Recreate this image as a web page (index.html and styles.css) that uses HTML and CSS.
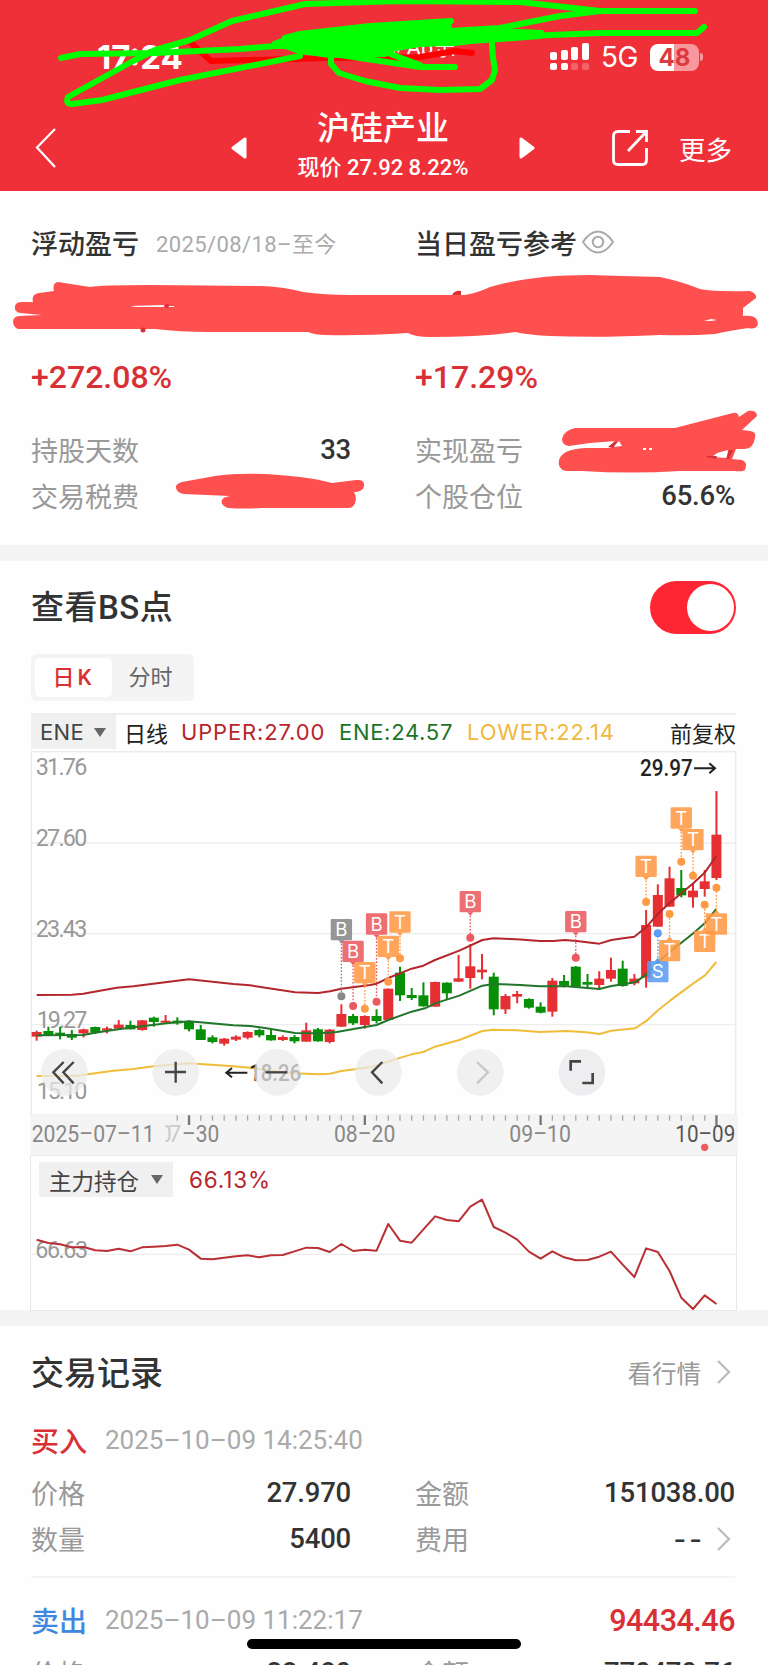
FILE: index.html
```html
<!DOCTYPE html>
<html lang="zh-CN">
  <head>
    <meta charset="utf-8" />
    <meta name="viewport" content="width=device-width, initial-scale=1" />
    <title>沪硅产业</title>
    <link rel="stylesheet" href="styles.css">
  </head>
  <body>
    <header class="header">
      <div class="status">
        <span class="time">17:24</span>
        <span class="island">颜 Ab乐</span>
        <svg class="signal" width="39" height="28" viewBox="0 0 39 28" fill="#fff">
          <rect x="0" y="9" width="7" height="8" rx="2" />
          <rect x="11" y="7" width="7" height="10" rx="2" />
          <rect x="21" y="4" width="7" height="13" rx="2" />
          <rect x="32" y="0" width="7" height="17" rx="2" />
          <rect x="0" y="20" width="7" height="7" rx="2" />
          <rect x="11" y="20" width="7" height="7" rx="2" />
          <rect x="21" y="20" width="7" height="7" rx="2" opacity="0.25" />
          <rect x="32" y="20" width="7" height="7" rx="2" opacity="0.25" />
        </svg>
        <span class="network">5G</span>
        <span class="battery">48</span>
        <span class="battery-tip"></span>
      </div>
      <div class="navbar">
        <svg class="back" width="24" height="42" viewBox="0 0 24 42">
          <path d="M21 2 L3 20.500 L21 40" fill="none" stroke="#fff" stroke-width="2.200" />
        </svg>
        <svg class="prev" width="16" height="24" viewBox="0 0 16 24">
          <path d="M14 3 V21 L2 12 Z" fill="#fff" stroke="#fff" stroke-width="3" stroke-linejoin="round" />
        </svg>
        <div class="title">
          <h1>沪硅产业</h1>
          <p>现价 27.92 8.22%</p>
        </div>
        <svg class="next" width="16" height="24" viewBox="0 0 16 24">
          <path d="M2 3 V21 L14 12 Z" fill="#fff" stroke="#fff" stroke-width="3" stroke-linejoin="round" />
        </svg>
        <svg class="share" width="38" height="38" viewBox="0 0 38 38" fill="none" stroke="#fff" stroke-width="2.800">
          <path d="M19 2.500 H7 Q2.500 2.500 2.500 7 V31 Q2.500 35.500 7 35.500 H31 Q35.500 35.500 35.500 31 V19" />
          <path d="M25 2.500 H35.500 V13 M35 3 L17 22" />
        </svg>
        <span class="more">更多</span>
      </div>
      <svg class="doodle" width="768" height="190" viewBox="0 0 768 190" fill="none" stroke-linecap="round" stroke-linejoin="round">
        <path stroke="#f00" stroke-width="6" d="M189 41 L211 61 L250 60 L330 58 L420 57 L455 51 L472 53" />
        <g stroke="#0f0" stroke-width="6">
          <path d="M61 58 L80 54 L155 53 L240 49 L275 46 L340 46" />
          <path d="M695 11 H600 L520 2 L400 1 L305 4 L232 21 L190 41 L130 68 L67 97 Q64 104 72 104 L102 100 L180 80 L300 56" stroke="none" />
          <path d="M695 11 H600 L520 2 L400 1 L305 4 L232 21 L190 40 L155 50 L133 61 L68 97 Q65 104 72 104 L102 100 L180 80 L300 56" />
          <path d="M600 11 L560 16 L500 28 L450 31" />
          <path d="M704 27 L697 33 L600 33 L500 37 L455 43 L390 44" />
          <path d="M331 57 V64 L339 73 L365 81 L400 88 L440 90 L480 89 L492 80 L495 70 L493 58 L492 44" />
          <path d="M340 55 L380 61 L420 67 H455 M385 52 L420 65" />
          <path d="M285 38 L300 34 L370 26 L451 21" />
        </g>
        <path fill="#0f0" stroke="#0f0" stroke-width="4" d="M274 43 L295 36 L340 31 L400 26 L450 26 L445 31 L495 30 L542 32 L540 37 L500 40 L455 43 L420 45 L390 50 L385 55 L330 56 L300 52 Z" />
      </svg>
    </header>

    <section class="summary">
      <div class="col">
        <div class="heading">浮动盈亏<span class="period">2025/08/18–至今</span></div>
        <div class="rate">+272.08%</div>
        <div class="row"><label>持股天数</label><b>33</b></div>
        <div class="row"><label>交易税费</label></div>
      </div>
      <div class="col">
        <div class="heading">当日盈亏参考
          <svg class="eye" width="32" height="24" viewBox="0 0 32 24" fill="none" stroke="#aaa" stroke-width="2">
            <path d="M1 12 Q8 1.500 16 1.500 T31 12 Q24 22.500 16 22.500 T1 12 Z" />
            <circle cx="16" cy="12" r="5.200" />
          </svg>
        </div>
        <div class="rate">+17.29%</div>
        <div class="row"><label>实现盈亏</label></div>
        <div class="row"><label>个股仓位</label><b>65.6%</b></div>
      </div>
      <svg class="doodle" width="768" height="355" viewBox="0 190 768 355">
        <g fill="#ff5050">
          <path d="M58 282 L90 287 Q100 285 150 285 L262 286 Q285 287 303 292 Q325 295 350 295 L465 295 Q480 292 490 287 Q530 275 590 275 Q620 276 660 277 Q680 281 700 289 Q715 292 750 291 Q757 294 756 298 L743 308 V316 Q758 314 758 324 Q756 330 748 328 Q728 331 715 334 Q690 336 660 335 Q600 338 550 336 Q530 335 515 332 Q480 337 430 337 Q415 337 408 333 Q360 336 325 335 Q315 335 308 332 L210 332 Q180 332 155 329 H18 Q13 327 13 321 Q14 316 20 316 L42 315 L20 313 Q14 312 15 306 Q16 302 22 302 H33 Q31 294 39 293 L54 291 Q52 283 58 282 Z" />
          <path d="M176 488 Q175 484 182 482 L215 476 Q250 471 300 477 Q318 479 332 483 L356 480 Q365 479 364 486 Q363 492 354 492 Q356 495 356 499 Q355 508 348 508 H262 Q245 509 228 508 Q220 505 222 500 Q223 497 230 496 L184 494 Q177 493 176 488 Z" />
          <path d="M575 428 H675 L733 413 Q738 412 739 417 L748 411 Q757 410 757 416 L742 430 L750 431 Q757 432 755 438 Q753 449 745 449 H736 L732 459 L742 460 Q748 462 745 470 Q743 472 734 471 L680 471 Q630 474 582 471 H566 Q557 469 559 460 Q562 449 585 448 L611 448 L616 441 L590 443 L569 446 Q562 445 562 439 Q563 431 575 428 Z" />
        </g>
        <g fill="#fff">
          <path d="M130 306 L164 305 V307 L136 307 Z M168 306 H174 V307 H168 Z" />
          <path d="M704 321 L711 319 L717 320 L711 321 Z" />
          <path d="M613 447 L619 441 L622 446 Z M643 448 H646 V450 H643 Z M649 448 H652 V450 H649 Z M717 453 L728 450 L727 458 L712 457 Z" />
        </g>
        <g fill="#d92f35">
          <path d="M452 295 Q455 290 461 291 V295 Z" />
          <circle cx="167" cy="306" r="2" /><circle cx="143" cy="330" r="2.500" />
          <path d="M608 447 L615 441 L617 442 L613 448 Z M707 456 L717 456 L716 459 L706 457 Z M729 450 H733 L729 459 H726 Z" />
        </g>
      </svg>
    </section>

    <section class="chart-card">
      <div class="bs-row">
        <h2>查看BS点</h2>
        <span class="toggle"></span>
      </div>
      <div class="tabs">
        <span class="tab active">日K</span>
        <span class="tab">分时</span>
      </div>
      <div class="legend">
        <span class="select">ENE<i></i></span>
        <span class="line-type">日线</span>
        <span class="upper">UPPER:27.00</span>
        <span class="ene">ENE:24.57</span>
        <span class="lower">LOWER:22.14</span>
        <span class="adjust">前复权</span>
      </div>
      <svg class="kline" width="708" height="404" viewBox="90 33 2124 1212">
        <rect x="94" y="35" width="2113" height="1090" fill="none" stroke="#ebebeb" stroke-width="4" />
        <path d="M94 309 H2207 M94 581 H2207 M94 854 H2207" stroke="#ededed" stroke-width="4" />
        <rect x="92" y="1124" width="2122" height="121" fill="#f4f4f4" />
        <g class="axis">
          <text x="107" y="104" textLength="155">31.76</text>
          <text x="107" y="318" textLength="155">27.60</text>
          <text x="107" y="591" textLength="155">23.43</text>
          <text x="110" y="864" textLength="152">19.27</text>
          <text x="110" y="1077" textLength="152">15.10</text>
        </g>
        <g id="ticks" stroke="#aaa"></g>
        <g class="dates">
          <text class="faded" x="476" y="1205" textLength="68">07</text>
          <rect x="462" y="1150" width="34" height="66" fill="#f4f4f4" />
          <text x="95" y="1205" textLength="369" lengthAdjust="spacingAndGlyphs">2025–07–11</text>
          <text x="546" y="1205" textLength="112" lengthAdjust="spacingAndGlyphs">–30</text>
          <text x="1002" y="1205" textLength="184" lengthAdjust="spacingAndGlyphs">08–20</text>
          <text x="1528" y="1205" textLength="185" lengthAdjust="spacingAndGlyphs">09–10</text>
          <text class="today" x="2026" y="1205" textLength="180" lengthAdjust="spacingAndGlyphs">10–09</text>
        </g>
        <circle cx="2114" cy="1222" r="11" fill="#f05a5f" />
        <g id="candles"></g>
        <g fill="none" stroke-width="6" stroke-linejoin="round">
          <path stroke="#b3262b" d="M110 765 L215 764 L250 761 L350 743 L400 739 L567 718 L700 732 L750 736 L885 757 L955 759 L990 754 L1024 746 L1110 735 L1130 731 L1165 714 L1235 686 L1270 677 L1305 660 L1378 632 L1447 600 L1481 595 L1550 598 L1620 603 L1660 603 L1695 600 L1730 603 L1798 611 L1834 600 L1870 595 L1903 590 L1940 560 L1975 520 L2010 488 L2080 430 L2115 397 L2149 348" />
          <path stroke="#22762a" d="M110 886 L250 885 L285 878 L355 868 L426 859 L500 850 L567 844 L700 856 L750 858 L800 865 L885 879 L955 880 L1010 876 L1095 861 L1130 855 L1165 840 L1235 815 L1275 805 L1305 790 L1378 767 L1447 737 L1481 732 L1560 735 L1620 739 L1700 739 L1798 747 L1834 738 L1870 733 L1905 727 L1940 703 L1975 665 L2010 635 L2080 580 L2115 549 L2149 507" />
          <path stroke="#f0bd3a" d="M110 1008 L230 1007 L340 992 L400 987 L460 979 L567 970 L700 979 L750 983 L885 1000 L955 1003 L990 1001 L1024 993 L1110 982 L1130 976 L1195 955 L1235 943 L1270 936 L1305 920 L1378 900 L1447 873 L1481 869 L1550 871 L1620 876 L1700 873 L1760 877 L1798 882 L1834 872 L1905 865 L1940 842 L1975 810 L2010 782 L2080 730 L2115 706 L2149 666" />
        </g>
        <g id="marks"></g>
        <g class="extreme">
          <text x="1920" y="108" textLength="158" lengthAdjust="spacingAndGlyphs">29.97</text>
          <path d="M2082 85 H2144 M2128 70 L2145 85 L2128 100" />
          <text x="748" y="1023" textLength="155" lengthAdjust="spacingAndGlyphs">18.26</text>
          <path d="M742 998 H680 M696 984 L679 998 L696 1012" />
        </g>
        <g fill="#ebebeb" fill-opacity="0.75">
          <circle cx="193" cy="997" r="70" />
          <circle cx="527" cy="997" r="70" />
          <circle cx="832" cy="997" r="70" />
          <circle cx="1135" cy="997" r="70" />
          <circle cx="1441" cy="997" r="70" />
          <circle cx="1746" cy="997" r="70" fill="#e8e8ec" />
        </g>
        <g fill="none" stroke="#444" stroke-width="7">
          <path d="M191 966 L160 997 L191 1030 M221 966 L190 997 L221 1030" />
          <path d="M495 996 H558 M527 965 V1028" />
          <path d="M797 997 H862" />
          <path d="M1147 966 L1116 997 L1147 1030" />
          <path d="M1431 966 L1464 997 L1431 1030" stroke="#c8c8c8" />
          <path d="M1712 992 V964 H1743 M1778 999 V1029 H1747" stroke-width="8" />
        </g>
      </svg>
      <div class="holding">
        <div class="holding-head">
          <span class="select">主力持仓<i></i></span>
          <span class="upper">66.13%</span>
        </div>
        <svg width="706" height="154" viewBox="93 47 2118 462">
          <path d="M93 342 H2211" stroke="#ededed" stroke-width="4" />
          <text class="axis" x="106" y="352" textLength="158">66.63</text>
          <path id="holding-line" fill="none" stroke="#b93034" stroke-width="6" stroke-linejoin="round" />
        </svg>
      </div>
    </section>

    <section class="records">
      <div class="records-head">
        <h2>交易记录</h2>
        <span class="link">看行情
          <svg class="arrow" width="14" height="26" viewBox="0 0 14 26"><path d="M1 2 L12 13 L1 24" /></svg>
        </span>
      </div>
      <div class="record">
        <div class="record-title"><span class="buy">买入</span><time>2025–10–09 14:25:40</time></div>
        <div class="grid">
          <div class="row"><label>价格</label><b>27.970</b></div>
          <div class="row"><label>金额</label><b>151038.00</b></div>
          <div class="row"><label>数量</label><b>5400</b></div>
          <div class="row"><label>费用</label><b class="fee">--</b>
            <svg class="arrow" width="14" height="26" viewBox="0 0 14 26"><path d="M1 2 L12 13 L1 24" /></svg>
          </div>
        </div>
      </div>
      <div class="record">
        <div class="record-title"><span class="sell">卖出</span><time>2025–10–09 11:22:17</time><b>94434.46</b></div>
        <div class="grid">
          <div class="row"><label>价格</label><b>28.480</b></div>
          <div class="row"><label>金额</label><b>770470.76</b></div>
        </div>
      </div>
    </section>
    <div class="home-bar"></div>
    <script src="chart.js"></script>
  </body>
</html>
```
FILE: styles.css
```css
* {
  box-sizing: border-box;
}

body {
  position: relative;
  margin: 0;
  width: 768px;
  height: 1665px;
  overflow: hidden;
  background: #fefefe;
  color: #333;
  font-family: Roboto, "Noto Sans CJK SC", sans-serif;
}

h1,
h2,
p {
  margin: 0;
  font-weight: 500;
}

svg {
  display: block;
  flex: none;
}

.doodle {
  position: absolute;
  left: 0;
  top: 0;
}

/* header */
.header {
  position: relative;
  height: 191px;
  padding-top: 40px;
  background: #ef3038;
  color: #fff;
}

.status {
  display: flex;
  align-items: center;
  height: 34px;
  padding-left: 97px;
}

.time {
  width: 282px;
  font: bold 33px/34px Inter, sans-serif;
  letter-spacing: 0;
}

.island {
  width: 171px;
  height: 34px;
  font-size: 22px;
  line-height: 16px;
}

.network {
  width: 49px;
  margin-left: 12px;
  font: 28px/34px Inter, sans-serif;
  letter-spacing: -0.5px;
}

.battery {
  width: 49px;
  height: 27px;
  border-radius: 8px;
  background: linear-gradient(90deg, #fff 24px, #f8989c 24px);
  color: #dc3a41;
  font: bold 24px/27px Inter, sans-serif;
  text-align: center;
}

.battery-tip {
  width: 3px;
  height: 8px;
  margin-left: 1px;
  border-radius: 0 3px 3px 0;
  background: #f8989c;
}

.navbar {
  display: flex;
  align-items: center;
  height: 110px;
  margin-top: 19px;
  padding: 0 35px 0 34px;
}

.prev {
  margin-left: 173px;
}

.title {
  width: 240px;
  margin: 0 16px;
  text-align: center;
}

.title h1 {
  font-size: 33px;
  line-height: 40px;
}

.title p {
  font-size: 22px;
  line-height: 38px;
  white-space: nowrap;
}

.share {
  margin-left: 76px;
}

.more {
  margin-left: 30px;
  font-size: 26.5px;
}

/* profit summary */
.summary {
  position: relative;
  display: flex;
  padding: 0 33px 0 31px;
  height: 354px;
}

.summary .doodle {
  top: -1px;
}

.summary .col {
  width: 320px;
}

.summary .col + .col {
  margin-left: 64px;
}

.heading {
  display: flex;
  align-items: center;
  height: 76px;
  margin-top: 13px;
  font-size: 27px;
  font-weight: 500;
  white-space: nowrap;
}

.period {
  margin-left: 17px;
  color: #aaa;
  font-size: 22px;
  font-weight: 400;
  letter-spacing: 0.4px;
}

.eye {
  margin-left: 5px;
}

.rate {
  height: 50px;
  margin-top: 72px;
  color: #d93035;
  font-size: 32px;
  line-height: 50px;
  font-weight: 500;
}

.row {
  display: flex;
  align-items: center;
  height: 46.5px;
  font-size: 27px;
  white-space: nowrap;
}

.row label {
  margin-right: auto;
  color: #999;
}

.row b {
  font-size: 27.5px;
  font-weight: 500;
  letter-spacing: -0.2px;
}

.rate + .row {
  margin-top: 24px;
}

/* chart */
.chart-card {
  padding: 0 30px;
  border-top: 16px solid #f4f4f4;
  height: 781px;
  border-bottom: 16px solid #f4f4f4;
}

.bs-row {
  display: flex;
  justify-content: space-between;
  align-items: center;
  height: 93px;
  padding: 0 2px 0 1px;
}

h2 {
  font-size: 33px;
}

.bs-row h2 {
  padding-bottom: 6px;
  letter-spacing: 0.5px;
}

.toggle {
  width: 86px;
  height: 53px;
  padding: 3px;
  border-radius: 27px;
  background: #ff2634;
}

.toggle::before {
  content: "";
  display: block;
  width: 47px;
  height: 47px;
  margin-left: 34px;
  border-radius: 50%;
  background: #fff;
}

.tabs {
  display: flex;
  width: 163px;
  height: 47px;
  margin: 0 0 12px 1px;
  padding: 4px;
  border-radius: 6px;
  background: #f4f4f4;
}

.tab {
  width: 77px;
  color: #666;
  font-size: 22px;
  line-height: 39px;
  text-align: center;
}

.tab.active {
  border-radius: 5px;
  background: #fff;
  color: #d93035;
  font-weight: 500;
  letter-spacing: 3px;
}

.legend {
  display: flex;
  align-items: center;
  height: 38px;
  margin: 0 2px 0 1px;
  padding-bottom: 2px;
  border-top: 2px solid #eee;
  color: #222;
  font-family: Inter, "Noto Sans CJK SC", sans-serif;
  font-size: 22px;
  white-space: nowrap;
}

.select {
  display: flex;
  align-items: center;
  background: #f0f0f0;
  color: #444;
}

.select i {
  border: 6px solid transparent;
  border-top: 9px solid #666;
  border-bottom: 0;
}

.legend .select {
  width: 85px;
  height: 34px;
  padding-left: 9px;
  letter-spacing: 0.3px;
}

.legend .select i {
  margin-left: 10px;
}

.line-type {
  width: 57px;
  margin-left: 8px;
}

.upper {
  color: #b8252a;
  letter-spacing: 0.85px;
}

.legend .upper {
  width: 158px;
}

.ene {
  width: 128px;
  color: #1c7426;
  letter-spacing: 0.7px;
}

.lower {
  color: #f0b840;
  letter-spacing: 0.85px;
}

.adjust {
  margin-left: auto;
}

.axis {
  fill: #999;
  font-size: 70px;
}

.dates {
  fill: #888;
  font-size: 70px;
}

.dates .faded {
  fill: #ccc;
}

.dates .today {
  fill: #555;
}

.extreme text {
  fill: #222;
  font-size: 70px;
  font-weight: 500;
}

.extreme path {
  fill: none;
  stroke: #222;
  stroke-width: 6;
}

.badge {
  fill: #fff;
  font-family: Inter, sans-serif;
  font-size: 56px;
  text-anchor: middle;
}

.holding {
  position: relative;
  width: 707px;
  height: 156px;
  border: 1px solid #e8e8e8;
}

.holding-head {
  position: absolute;
  left: 8px;
  top: 6px;
  display: flex;
  align-items: center;
  font: 22.5px Inter, "Noto Sans CJK SC", sans-serif;
}

.holding .select {
  width: 134px;
  height: 35px;
  margin-right: 16px;
  padding-left: 10px;
}

.holding .select i {
  margin-left: 12px;
}

/* trade records */
.records {
  padding: 0 33px 0 31px;
}

.records-head {
  display: flex;
  justify-content: space-between;
  align-items: center;
  height: 90px;
}

.link {
  display: flex;
  align-items: center;
  gap: 16px;
  padding: 2px 4px 0 0;
  color: #999;
  font-size: 24.5px;
}

.arrow {
  fill: none;
  stroke: #bbb;
  stroke-width: 2.2;
}

.record-title {
  display: flex;
  align-items: center;
  height: 48px;
  font-size: 28px;
}

.record-title span {
  width: 74px;
  font-weight: 500;
}

.record-title time {
  color: #aaa;
  font-size: 26px;
}

.record-title b {
  margin-left: auto;
  color: #d93035;
  font-size: 30.5px;
  font-weight: 500;
  letter-spacing: -0.5px;
}

.buy {
  color: #d93035;
}

.sell {
  color: #3f87e0;
}

.grid {
  display: grid;
  grid-template-columns: 320px 320px;
  column-gap: 64px;
  padding-top: 5px;
}

.record + .record {
  margin-top: 14px;
  padding-top: 18px;
  border-top: 2px solid #f4f4f4;
}

.row .fee {
  margin-right: 12px;
  font-family: Inter, sans-serif;
  letter-spacing: 3px;
}

.fee + .arrow {
  margin-right: 4px;
}

.home-bar {
  position: absolute;
  left: 247px;
  top: 1639px;
  width: 274px;
  height: 10px;
  border-radius: 5px;
  background: #000;
}
```
FILE: chart.js
```js
const NS = "http://www.w3.org/2000/svg";
const STEP = 35.16;
const RED = "#e52f32";
const GREEN = "#079007";
const xOf = (i) => 110 + i * STEP;

function add(parent, tag, attrs, text) {
  const el = document.createElementNS(NS, tag);
  for (const key in attrs) el.setAttribute(key, attrs[key]);
  if (text) el.textContent = text;
  parent.appendChild(el);
}

// color, high, low, body top, body bottom
const candles = [
  ["r", 872, 902, 876, 890], ["g", 860, 888, 873, 886], ["g", 860, 898, 878, 888],
  ["g", 870, 900, 882, 893], ["r", 866, 892, 868, 880], ["g", 860, 882, 861, 878],
  ["r", 860, 880, 865, 872], ["r", 840, 868, 854, 866], ["g", 842, 868, 855, 868],
  ["r", 840, 872, 841, 870], ["g", 830, 860, 833, 846], ["r", 825, 852, 842, 848],
  ["g", 832, 854, 842, 850], ["g", 842, 874, 844, 868], ["g", 855, 900, 868, 900],
  ["g", 886, 910, 892, 906], ["r", 894, 917, 896, 911], ["r", 886, 903, 890, 899],
  ["r", 874, 898, 876, 893], ["g", 866, 892, 870, 886], ["g", 868, 902, 885, 901],
  ["r", 886, 903, 891, 900], ["g", 885, 910, 891, 904], ["r", 848, 905, 871, 905],
  ["g", 864, 905, 868, 904], ["r", 867, 910, 869, 906], ["r", 793, 860, 822, 860],
  ["g", 822, 855, 828, 850], ["r", 826, 866, 828, 855], ["g", 808, 850, 828, 843],
  ["r", 746, 840, 746, 840], ["g", 680, 783, 698, 766], ["g", 744, 780, 765, 774],
  ["g", 727, 800, 766, 799], ["r", 725, 800, 726, 800], ["g", 727, 777, 728, 760],
  ["r", 645, 726, 715, 725], ["r", 612, 746, 679, 714], ["r", 642, 718, 689, 697],
  ["g", 698, 826, 710, 808], ["r", 762, 822, 768, 808], ["r", 753, 790, 762, 770],
  ["g", 775, 806, 777, 803], ["g", 787, 820, 800, 818], ["r", 714, 830, 722, 815],
  ["g", 705, 742, 723, 737], ["g", 678, 742, 680, 740], ["g", 702, 742, 726, 734],
  ["r", 694, 750, 716, 735], ["r", 653, 725, 690, 716], ["g", 662, 740, 686, 738],
  ["r", 702, 736, 716, 730], ["r", 510, 743, 555, 713], ["r", 433, 560, 465, 560],
  ["r", 380, 500, 415, 500], ["g", 390, 472, 444, 466], ["r", 430, 503, 452, 472],
  ["r", 390, 470, 424, 447], ["r", 153, 420, 284, 414],
];
const candleGroup = document.getElementById("candles");
candles.forEach(([c, high, low, top, bottom], i) => {
  const fill = c === "r" ? RED : GREEN;
  add(candleGroup, "rect", { x: xOf(i) - 3, y: high, width: 6, height: low - high, fill });
  add(candleGroup, "rect", { x: xOf(i) - 15, y: top, width: 30, height: bottom - top, fill });
});

const ticks = document.getElementById("ticks");
for (let i = 12; i < 59; i++) {
  const major = i % 15 === 13;
  add(ticks, "path", {
    d: `M${xOf(i)} 1126 V${major ? 1155 : 1142}`,
    "stroke-width": major ? 7 : 4,
    stroke: major ? "#777" : "#aaa",
  });
}

// letter, color, day, box top, dot y
const marks = [
  ["B", "#888888", 26, 537, 769], ["B", "#ea5a60", 27, 602, 798],
  ["T", "#ff9a45", 28, 666, 806], ["B", "#ea5a60", 29, 520, 785],
  ["T", "#ff9a45", 31, 514, 655], ["T", "#ff9a45", 30, 587, 725],
  ["B", "#ea5a60", 37, 453, 593], ["B", "#ea5a60", 46, 513, 653],
  ["T", "#ff9a45", 52, 347, 486], ["S", "#5b9df2", 53, 663, 580],
  ["T", "#ff9a45", 54, 600, 522], ["T", "#ff9a45", 55, 202, 365],
  ["T", "#ff9a45", 56, 267, 407], ["T", "#ff9a45", 57, 572, 494],
  ["T", "#ff9a45", 58, 520, 443],
];
const markGroup = document.getElementById("marks");
marks.forEach(([letter, color, day, top, dot]) => {
  const x = xOf(day);
  const above = dot > top;
  const edge = above ? top + 64 : top;
  const tip = above ? edge + 10 : edge - 10;
  add(markGroup, "path", { d: `M${x} ${tip} V${dot}`, stroke: color, "stroke-width": 4, "stroke-dasharray": "5 5" });
  add(markGroup, "circle", { cx: x, cy: dot, r: 12, fill: color });
  add(markGroup, "rect", { x: x - 32, y: top, width: 64, height: 64, rx: 4, fill: color, "fill-opacity": 0.88 });
  add(markGroup, "path", { d: `M${x - 9} ${edge} H${x + 9} L${x} ${tip} Z`, fill: color });
  add(markGroup, "text", { x, y: top + 52, class: "badge" }, letter);
});

const holding = [
  298, 308, 312, 321, 320, 330, 332, 325, 333, 321, 319, 317, 313, 328, 355,
  357, 352, 348, 345, 351, 345, 344, 333, 322, 323, 335, 311, 332, 328, 331,
  251, 301, 307, 267, 228, 239, 243, 199, 178, 260, 277, 298, 334, 355, 333,
  351, 360, 359, 349, 334, 373, 410, 324, 335, 392, 472, 506, 465, 491,
];
document
  .getElementById("holding-line")
  .setAttribute("d", "M" + holding.map((y, i) => `${xOf(i)} ${y}`).join(" L"));
```
